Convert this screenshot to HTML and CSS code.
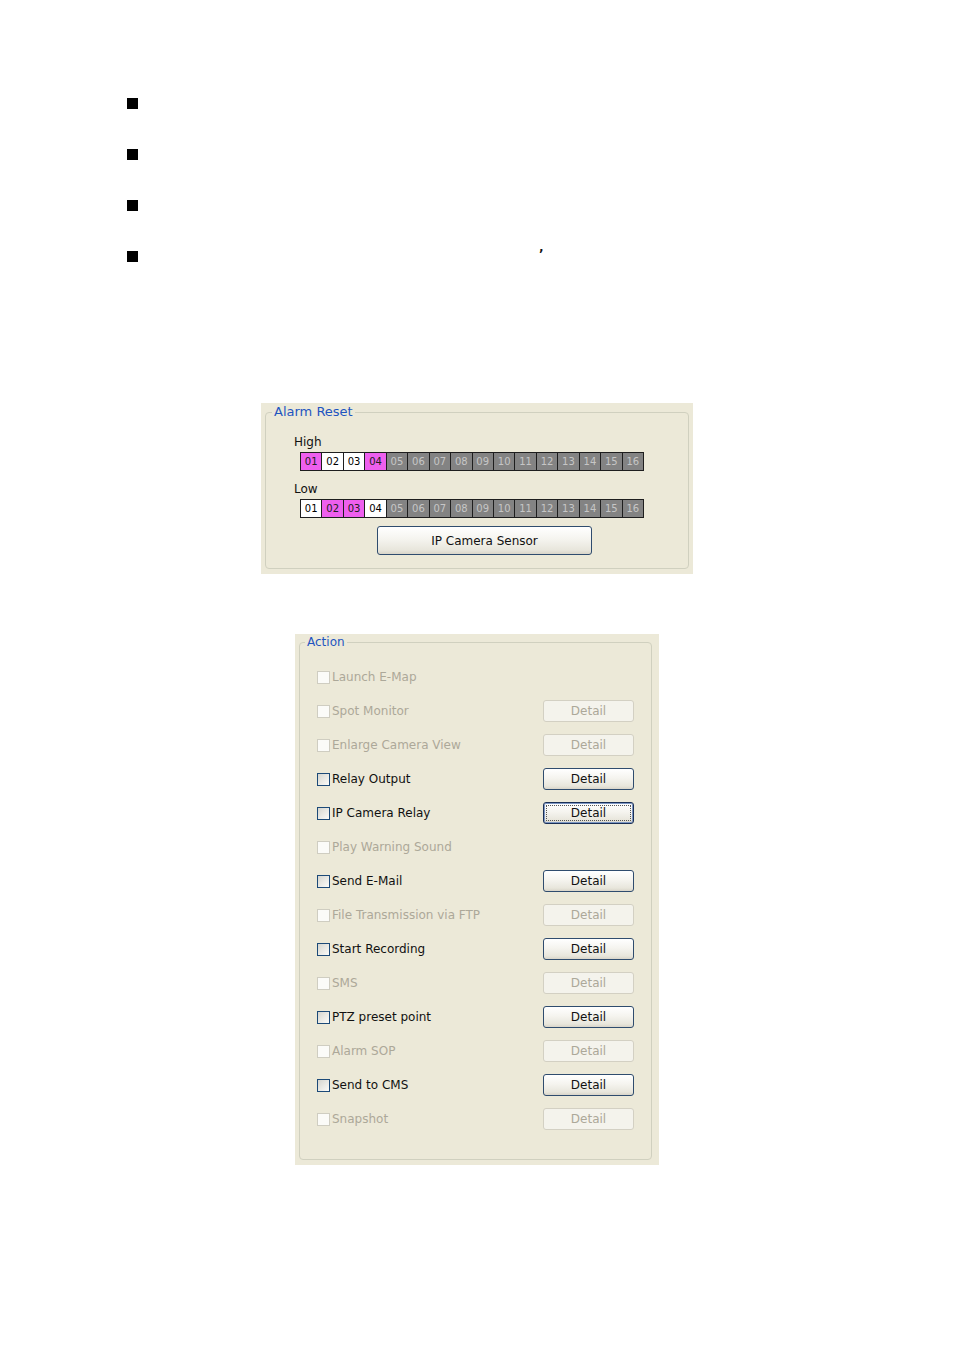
FILE: index.html
```html
<!DOCTYPE html>
<html>
<head>
<meta charset="utf-8">
<link rel="stylesheet" href="styles.css">
</head>
<body>
<div class="page">
  <ul class="bullets">
    <li><span class="sq"></span></li>
    <li><span class="sq"></span></li>
    <li><span class="sq"></span></li>
    <li><span class="sq"></span><span class="mark">’</span></li>
  </ul>

  <div class="panel alarm">
    <fieldset class="group">
      <legend>Alarm Reset</legend>
      <div class="alarm-body">
        <div class="lbl">High</div>
        <div class="cells">
          <span class="c on">01</span><span class="c w">02</span><span class="c w">03</span><span class="c on">04</span>
          <span class="c g">05</span><span class="c g">06</span><span class="c g">07</span><span class="c g">08</span>
          <span class="c g">09</span><span class="c g">10</span><span class="c g">11</span><span class="c g">12</span>
          <span class="c g">13</span><span class="c g">14</span><span class="c g">15</span><span class="c g">16</span>
        </div>
        <div class="lbl low">Low</div>
        <div class="cells">
          <span class="c w">01</span><span class="c on">02</span><span class="c on">03</span><span class="c w">04</span>
          <span class="c g">05</span><span class="c g">06</span><span class="c g">07</span><span class="c g">08</span>
          <span class="c g">09</span><span class="c g">10</span><span class="c g">11</span><span class="c g">12</span>
          <span class="c g">13</span><span class="c g">14</span><span class="c g">15</span><span class="c g">16</span>
        </div>
        <button class="btn sensor">IP Camera Sensor</button>
      </div>
    </fieldset>
  </div>

  <div class="panel action">
    <fieldset class="group">
      <legend>Action</legend>
      <div class="action-body">
        <div class="row dis"><span class="cb"></span><span class="txt">Launch E-Map</span></div>
        <div class="row dis"><span class="cb"></span><span class="txt">Spot Monitor</span><button class="btn det">Detail</button></div>
        <div class="row dis"><span class="cb"></span><span class="txt">Enlarge Camera View</span><button class="btn det">Detail</button></div>
        <div class="row"><span class="cb"></span><span class="txt">Relay Output</span><button class="btn det">Detail</button></div>
        <div class="row"><span class="cb"></span><span class="txt">IP Camera Relay</span><button class="btn det focus"><span class="fr">Detail</span></button></div>
        <div class="row dis"><span class="cb"></span><span class="txt">Play Warning Sound</span></div>
        <div class="row"><span class="cb"></span><span class="txt">Send E-Mail</span><button class="btn det">Detail</button></div>
        <div class="row dis"><span class="cb"></span><span class="txt">File Transmission via FTP</span><button class="btn det">Detail</button></div>
        <div class="row"><span class="cb"></span><span class="txt">Start Recording</span><button class="btn det">Detail</button></div>
        <div class="row dis"><span class="cb"></span><span class="txt">SMS</span><button class="btn det">Detail</button></div>
        <div class="row"><span class="cb"></span><span class="txt">PTZ preset point</span><button class="btn det">Detail</button></div>
        <div class="row dis"><span class="cb"></span><span class="txt">Alarm SOP</span><button class="btn det">Detail</button></div>
        <div class="row"><span class="cb"></span><span class="txt">Send to CMS</span><button class="btn det">Detail</button></div>
        <div class="row dis"><span class="cb"></span><span class="txt">Snapshot</span><button class="btn det">Detail</button></div>
      </div>
    </fieldset>
  </div>
</div>
</body>
</html>
```

FILE: styles.css
```css
html, body {
  margin: 0;
  padding: 0;
  background: #ffffff;
}
body {
  font-family: "DejaVu Sans", "Liberation Sans", sans-serif;
  font-size: 12px;
  color: #111;
}
.page {
  width: 954px;
  padding-top: 98px;
}
.bullets {
  list-style: none;
  margin: 0;
  padding: 0 0 0 127px;
}
.bullets li {
  height: 51px;
  display: flex;
  align-items: flex-start;
}
.sq {
  width: 11px;
  height: 11px;
  background: #000;
  flex: none;
}
.mark {
  margin-left: 401px;
  margin-top: -4px;
  font-size: 12px;
  line-height: 14px;
  font-weight: bold;
}

.panel {
  margin: 0 auto;
  background: #ece9d8;
  box-sizing: border-box;
}
.alarm {
  width: 432px;
  margin-top: 101px;
  padding: 2px 4px 5px 4px;
}
.action {
  width: 364px;
  margin-top: 60px;
  padding: 1px 7px 5px 4px;
}
.group {
  margin: 0;
  padding: 0;
  border: 1px solid #d0d0bf;
  border-radius: 4px;
  min-width: 0;
}
.group legend {
  padding: 0 2px;
  margin-left: 6px;
  line-height: 14px;
  font-size: 12px;
  color: #1f55c0;
}
.alarm .group legend {
  font-size: 13px;
}
.action .group legend {
  margin-left: 5px;
}

.alarm-body {
  padding: 16px 0 13px 28px;
  display: flex;
  flex-direction: column;
  align-items: flex-start;
}
.lbl {
  line-height: 14px;
}
.lbl.low {
  margin-top: 11px;
}
.cells {
  margin-top: 3px;
  margin-left: 6px;
  width: 344px;
  box-sizing: border-box;
  display: grid;
  grid-template-columns: repeat(16, 1fr);
  gap: 1px;
  padding: 1px;
  background: #1e1e1e;
}
.c {
  height: 17px;
  line-height: 17px;
  font-size: 10px;
  text-align: center;
}
.c.on { background: #ee5fee; color: #202020; }
.c.w { background: #ffffff; color: #000; }
.c.g { background: #838383; color: #c6c6c6; }

.btn {
  font-family: "DejaVu Sans", "Liberation Sans", sans-serif;
  font-size: 12px;
  color: #111;
  border: 1px solid #2f4c6e;
  border-radius: 3px;
  background: linear-gradient(#ffffff 0%, #f5f4ef 45%, #e8e6dc 85%, #d9d5c9 100%);
  padding: 0;
  box-sizing: border-box;
  display: flex;
  align-items: center;
  justify-content: center;
}
.sensor {
  margin-top: 8px;
  margin-left: 83px;
  width: 215px;
  height: 29px;
}

.action-body {
  padding: 11px 17px 23px 17px;
}
.row {
  height: 34px;
  display: flex;
  align-items: center;
}
.cb {
  width: 13px;
  height: 13px;
  box-sizing: border-box;
  border: 1px solid #1c4a78;
  background: linear-gradient(135deg, #d5d5cf 0%, #e9e9e4 50%, #fbfbf9 100%);
  margin-right: 2px;
  flex: none;
}
.txt {
  flex: 1;
  line-height: 14px;
}
.det {
  width: 91px;
  height: 22px;
  flex: none;
}
.det.focus {
  border-color: #1a2f55;
  box-shadow: inset 0 0 0 1px #7d97c4;
}
.fr {
  display: block;
  width: 85px;
  height: 16px;
  line-height: 14px;
  border: 1px dotted #555;
  box-sizing: border-box;
  text-align: center;
}
.row.dis .txt { color: #aca899; }
.row.dis .cb {
  border-color: #cfcdc1;
  background: #fbfbf8;
}
.row.dis .det {
  color: #aca899;
  border-color: #d3d0c3;
  background: #f4f3ec;
}
```
